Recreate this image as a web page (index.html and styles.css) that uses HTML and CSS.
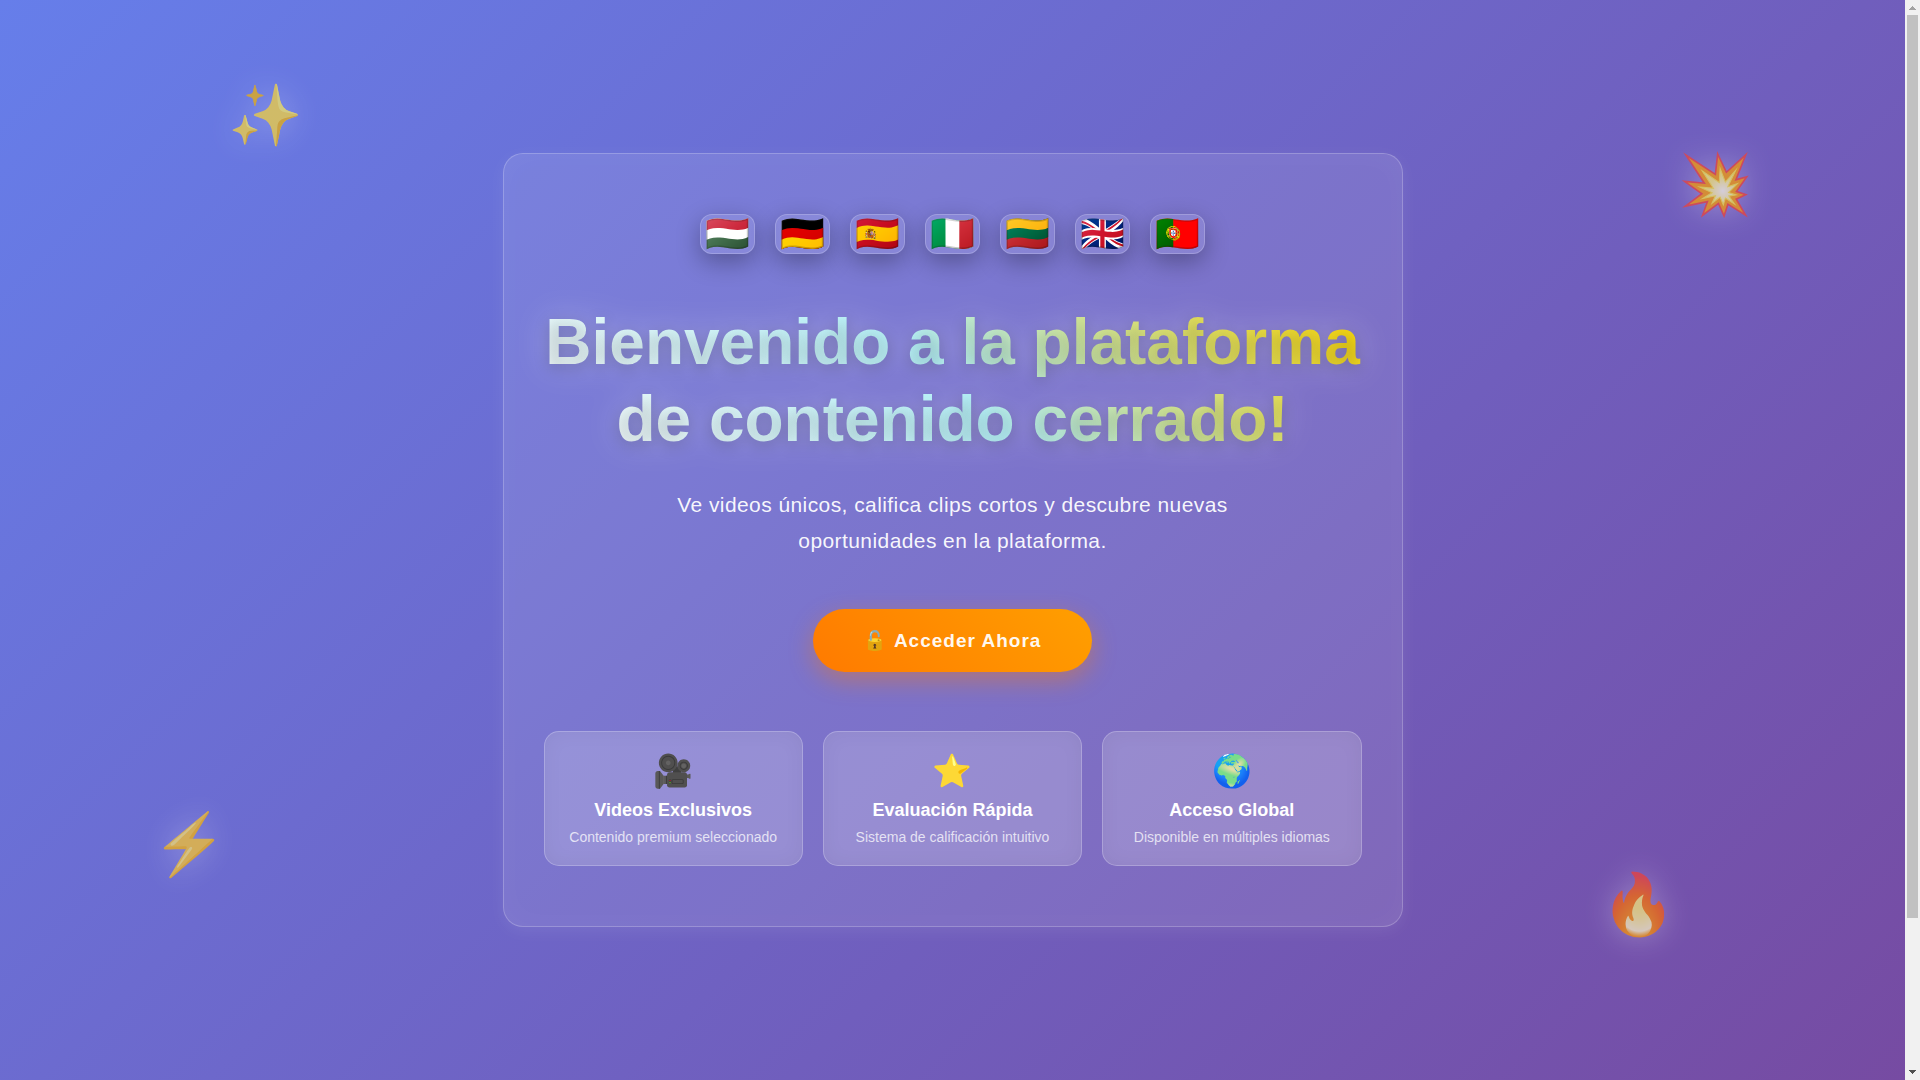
FILE: index.html
```
<!DOCTYPE html>
<html lang="es">
<head>
<meta charset="utf-8">
<meta name="viewport" content="width=device-width, initial-scale=1">
<title>Bienvenido a la plataforma</title>
<link rel="stylesheet" href="styles.css">
</head>
<body>
<div class="page">
  <span class="float float-sparkles" aria-hidden="true">✨</span>
  <span class="float float-burst" aria-hidden="true">💥</span>
  <span class="float float-bolt" aria-hidden="true">⚡</span>
  <span class="float float-fire" aria-hidden="true">🔥</span>
  <main class="card">
    <div class="flags">
      <span class="flag">🇭🇺</span>
      <span class="flag">🇩🇪</span>
      <span class="flag">🇪🇸</span>
      <span class="flag">🇮🇹</span>
      <span class="flag">🇱🇹</span>
      <span class="flag">🇬🇧</span>
      <span class="flag">🇵🇹</span>
    </div>
    <h1 class="title">Bienvenido a la plataforma de contenido cerrado!</h1>
    <p class="subtitle">Ve videos únicos, califica clips cortos y descubre nuevas oportunidades en la plataforma.</p>
    <button class="cta" type="button">🔓 Acceder Ahora</button>
    <div class="features">
      <section class="feature">
        <span class="feature-icon">🎥</span>
        <h2 class="feature-title">Videos Exclusivos</h2>
        <p class="feature-text">Contenido premium seleccionado</p>
      </section>
      <section class="feature">
        <span class="feature-icon">⭐</span>
        <h2 class="feature-title">Evaluación Rápida</h2>
        <p class="feature-text">Sistema de calificación intuitivo</p>
      </section>
      <section class="feature">
        <span class="feature-icon">🌍</span>
        <h2 class="feature-title">Acceso Global</h2>
        <p class="feature-text">Disponible en múltiples idiomas</p>
      </section>
    </div>
  </main>
</div>
<div class="scrollbar" aria-hidden="true">
  <svg class="arrow" viewBox="0 0 15 15"><path d="M4 10h7v-1h-1v-1h-1v-1h-1v-1h-1v1h-1v1h-1v1h-1z" fill="#a3a3a3"/></svg>
  <div class="track"><div class="thumb"></div></div>
  <svg class="arrow" viewBox="0 0 15 15"><path d="M4 5h7v1h-1v1h-1v1h-1v1h-1v-1h-1v-1h-1v-1h-1z" fill="#505050"/></svg>
</div>
</body>
</html>
```
FILE: styles.css
```
* {
  box-sizing: border-box;
  margin: 0;
}

body {
  display: flex;
  min-height: 100vh;
  font-family: "Liberation Sans", Arial, "Noto Color Emoji", sans-serif;
  color: #fff;
}

.page {
  position: relative;
  flex: 1;
  display: flex;
  align-items: center;
  justify-content: center;
  padding: 20px;
  background: linear-gradient(135deg, #667eea 0%, #764ba2 100%);
  overflow: hidden;
}

.card {
  width: 100%;
  max-width: 900px;
  padding: 60px 40px;
  border: 1px solid rgba(255, 255, 255, 0.22);
  border-radius: 20px;
  background: rgba(255, 255, 255, 0.1);
  box-shadow: 0 4px 16px rgba(255, 255, 255, 0.08), inset 0 0 32px rgba(255, 255, 255, 0.03);
  display: flex;
  flex-direction: column;
  align-items: center;
  text-align: center;
}

.flags {
  display: flex;
  flex-wrap: wrap;
  justify-content: center;
  gap: 20px;
  margin-bottom: 50px;
}

.flag {
  display: flex;
  justify-content: center;
  width: 55px;
  height: 40px;
  border: 1px solid rgba(255, 255, 255, 0.2);
  border-radius: 12px;
  background: rgba(255, 255, 255, 0.1);
  box-shadow: 0 8px 25px rgba(0, 0, 0, 0.3);
  font-size: 36px;
  line-height: 38px;
}

.title {
  margin-bottom: 29px;
  font-size: 64px;
  line-height: 77px;
  background: linear-gradient(45deg, #fff, #b8f4fb, #ffd700);
  -webkit-background-clip: text;
  background-clip: text;
  color: transparent;
  text-shadow: 0 4px 15px rgba(0, 0, 0, 0.22);
  filter: drop-shadow(0 0 16px rgba(255, 255, 255, 0.35));
}

.subtitle {
  max-width: 600px;
  margin-bottom: 50px;
  font-size: 21px;
  line-height: 36px;
  letter-spacing: 0.02em;
  color: rgba(255, 255, 255, 0.95);
}

.cta {
  margin-bottom: 59px;
  padding: 20px 51px;
  border: 0;
  border-radius: 50px;
  background: linear-gradient(45deg, #ff7a00, #ff9f00);
  box-shadow: 0 8px 25px rgba(255, 122, 0, 0.4);
  font: bold 19px/23px "Liberation Sans", Arial, "Noto Color Emoji", sans-serif;
  letter-spacing: 1px;
  color: rgba(255, 255, 255, 0.95);
}

.features {
  display: grid;
  grid-template-columns: repeat(3, 1fr);
  gap: 20px;
  width: 100%;
}

.feature {
  padding: 20px;
  border: 1px solid rgba(255, 255, 255, 0.2);
  border-radius: 15px;
  background: rgba(255, 255, 255, 0.2);
  box-shadow: inset 0 0 20px rgba(0, 0, 0, 0.05);
}

.feature-icon {
  display: block;
  margin-bottom: 10px;
  font-size: 32px;
  line-height: 38px;
}

.feature-title {
  margin-bottom: 8px;
  font-size: 18px;
  line-height: 21px;
}

.feature-text {
  font-size: 14px;
  line-height: 16px;
  color: rgba(255, 255, 255, 0.75);
}

.float {
  position: absolute;
  font-size: 60px;
  line-height: 70px;
  opacity: 0.7;
  text-shadow: 0 0 30px rgba(255, 255, 255, 0.4);
}

.float-sparkles { left: 12%; top: 81px; }
.float-burst { right: 8%; top: 150px; }
.float-bolt { left: 8%; bottom: 200px; }
.float-fire { right: 12%; bottom: 140px; }

.scrollbar {
  width: 15px;
  display: flex;
  flex-direction: column;
  background: #f1f1f1;
}

.arrow {
  display: block;
  height: 15px;
}

.track {
  flex: 1;
  padding: 0 2px;
}

.thumb {
  height: 86%;
  background: #c1c1c1;
}
```
